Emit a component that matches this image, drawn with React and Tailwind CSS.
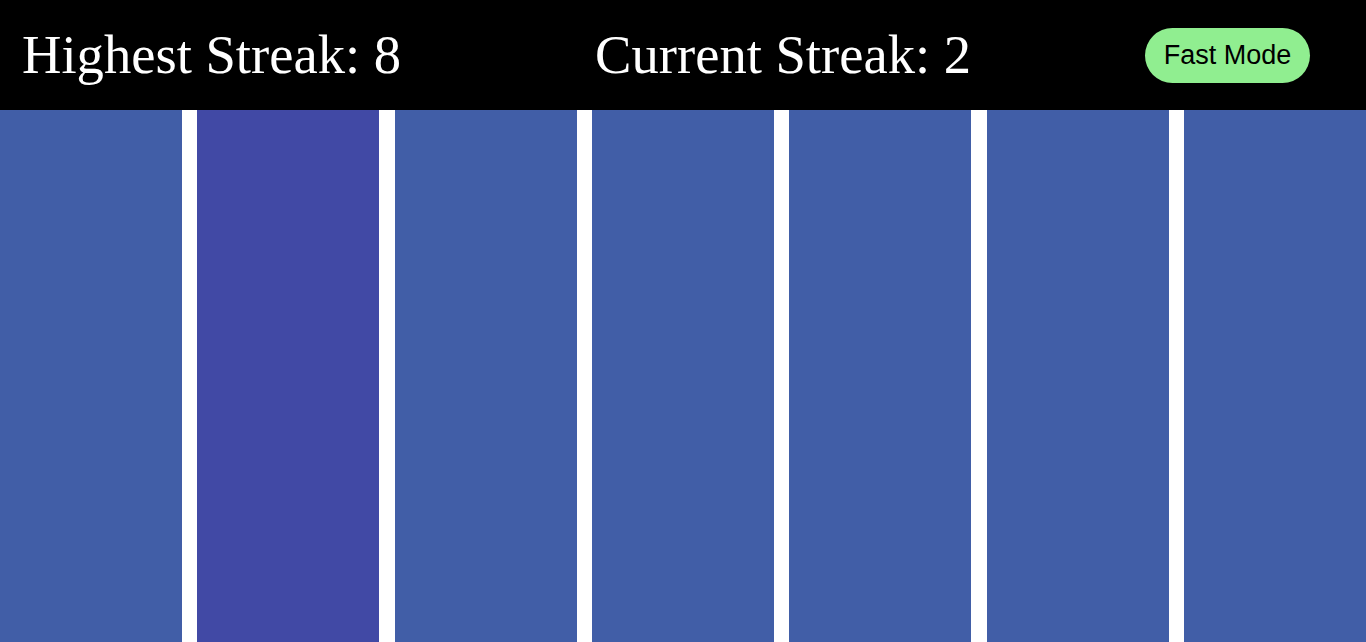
export default function App() {
  const lanes = [0, 1, 2, 3, 4, 5, 6];
  const active = 1;

  return (
    <div className="h-[642px] w-[1366px] overflow-hidden bg-white flex flex-col">
      <header className="h-[110px] shrink-0 bg-black flex items-center pl-[22px]">
        <h1 className="text-white text-[54.6px] leading-none font-normal font-['Liberation_Serif','Times_New_Roman',serif] whitespace-nowrap">
          Highest Streak: 8
        </h1>
        <h1 className="ml-[194px] text-white text-[54.6px] leading-none font-normal font-['Liberation_Serif','Times_New_Roman',serif] whitespace-nowrap">
          Current Streak: 2
        </h1>
        <button className="ml-[174px] h-[55px] w-[165px] rounded-full bg-[#90ee90] text-black text-[27px] font-['Liberation_Sans',Arial,sans-serif]">
          Fast Mode
        </button>
      </header>
      <div className="flex-1 grid grid-cols-7 gap-x-[15.33px]">
        {lanes.map((i) => (
          <div
            key={i}
            className={i === active ? "bg-[#4149a5]" : "bg-[#415ea7]"}
          />
        ))}
      </div>
    </div>
  );
}
